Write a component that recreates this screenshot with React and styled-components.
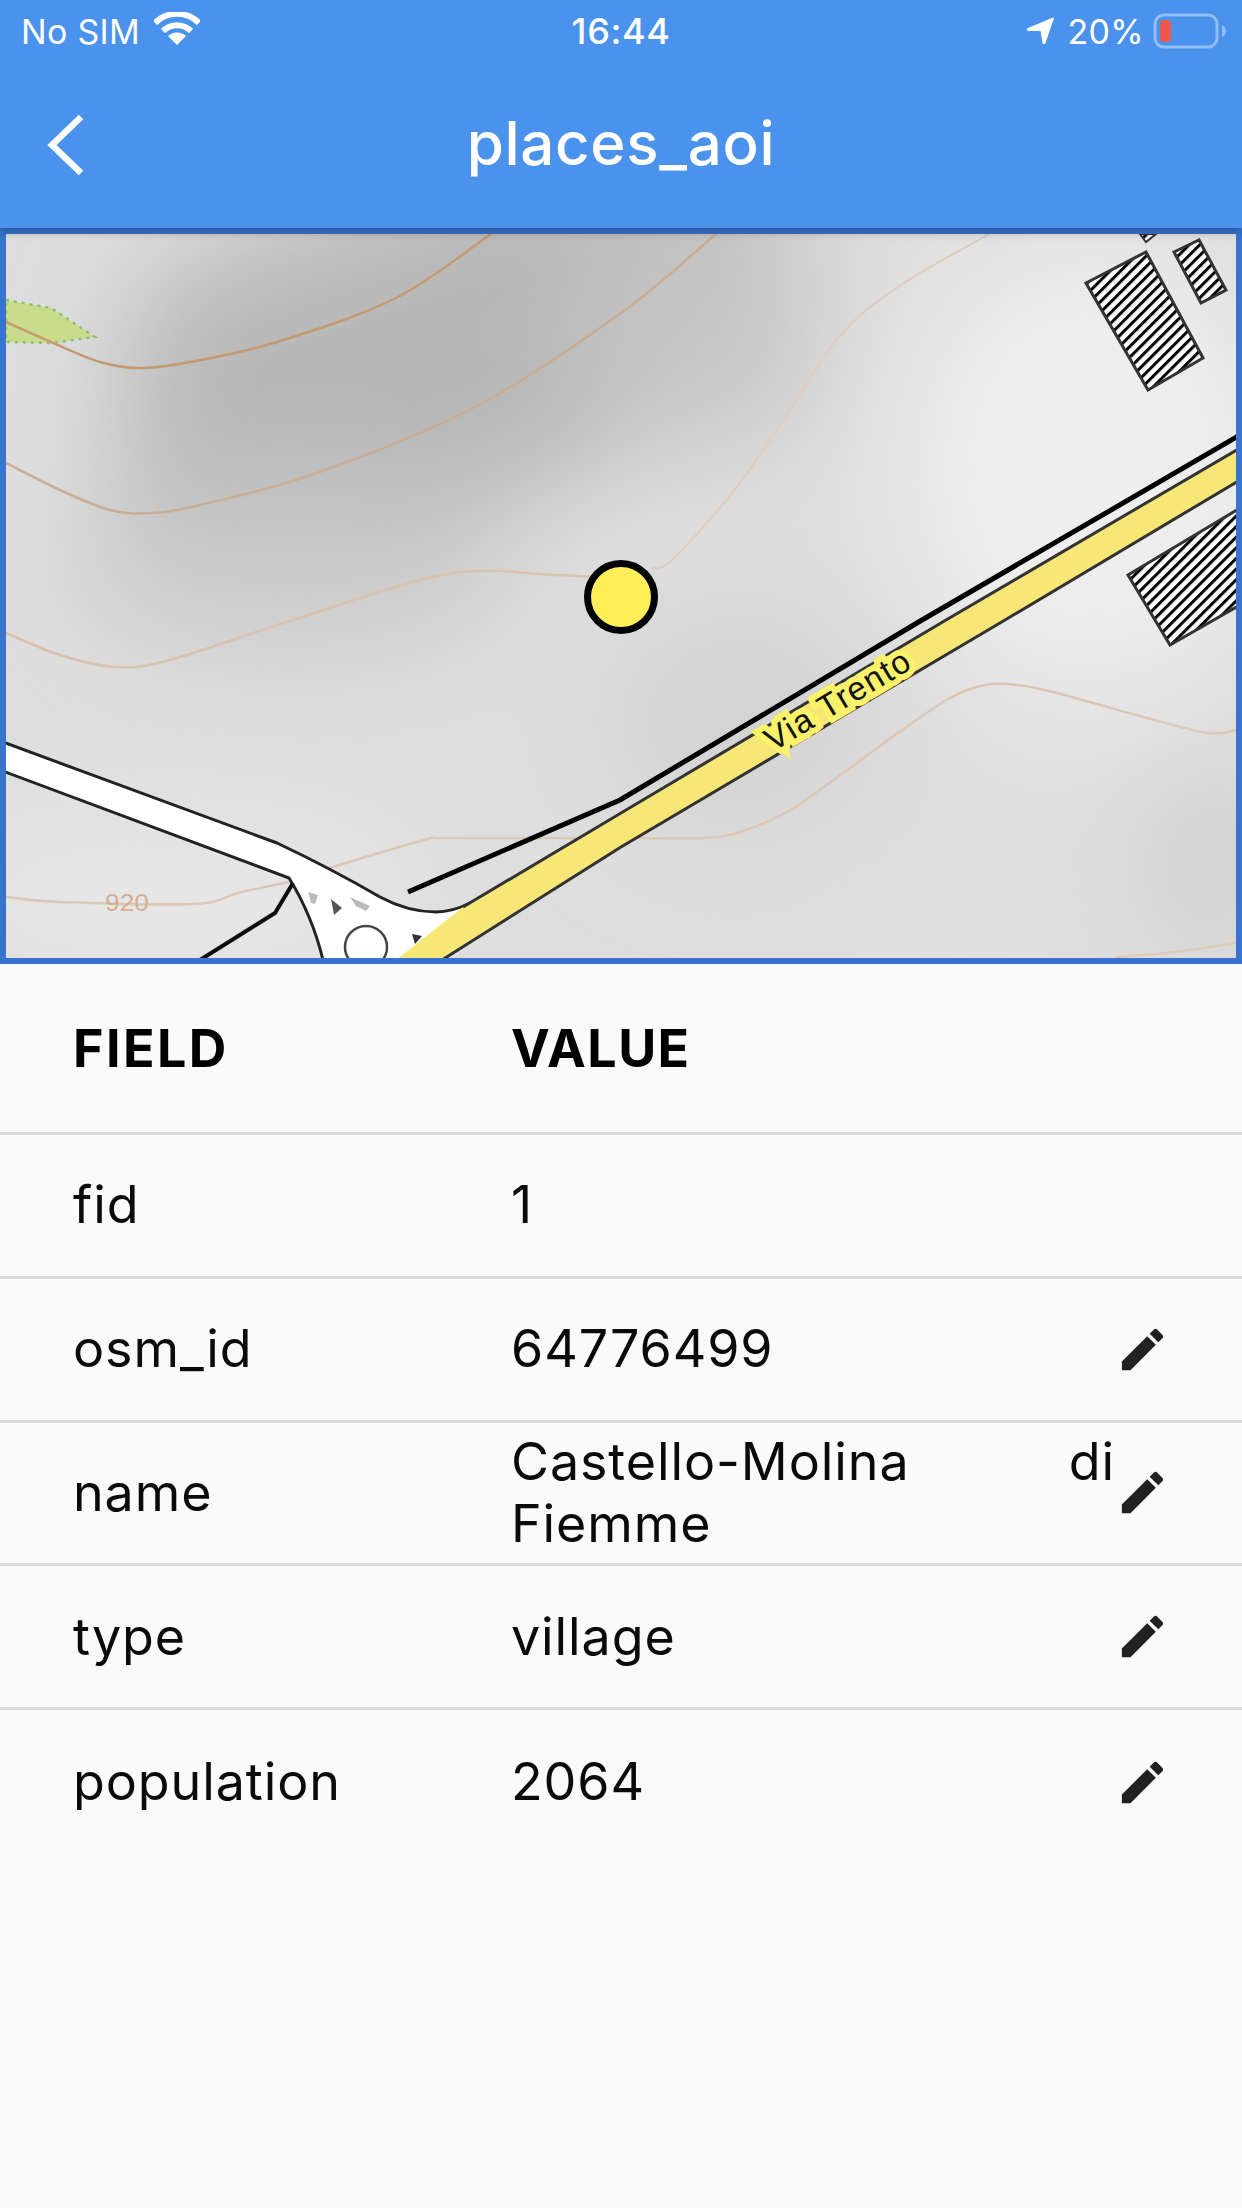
import React from 'react';
import styled, { createGlobalStyle } from 'styled-components';

const Global = createGlobalStyle`
  html, body { margin: 0; padding: 0; background: #fafafa; }
  body { font-family: Inter, "Liberation Sans", sans-serif; }
`;

const Page = styled.div`
  width: 1242px;
  height: 2208px;
  overflow: hidden;
  background: #fafafa;
  color: #0a0a0a;
`;

const AppBar = styled.header`
  position: relative;
  z-index: 1;
  height: 228px;
  background: #4a92ec;
  color: #fff;
  box-shadow: 0 3px 10px rgba(0, 0, 0, 0.3);
`;

const StatusBar = styled.div`
  height: 62px;
  display: grid;
  grid-template-columns: 1fr auto 1fr;
  align-items: center;
  padding: 0 14px 0 14px;
  font-size: 34px;
  letter-spacing: 0.3px;
`;

const StatusSide = styled.div`
  display: flex;
  align-items: center;
  gap: ${(p) => p.$gap || 14}px;
  padding-left: ${(p) => (p.$right ? 0 : 7)}px;
  justify-content: ${(p) => (p.$right ? 'flex-end' : 'flex-start')};
`;

const Clock = styled.div`
  font-size: 36px;
  font-weight: 500;
  letter-spacing: 0.6px;
`;

const NavRow = styled.div`
  height: 166px;
  display: grid;
  grid-template-columns: 1fr auto 1fr;
  align-items: center;
  padding: 0 46px;
`;

const BackIcon = styled.svg`
  display: block;
  width: 40px;
  height: 62px;
`;

const Title = styled.h1`
  margin: -5px 0 0;
  font-size: 60px;
  font-weight: 500;
  letter-spacing: 0.7px;
`;

const MapFrame = styled.div`
  border: 6px solid #3674cf;
  height: 724px;
  overflow: hidden;
`;

const MapSvg = styled.svg`
  display: block;
  width: 1230px;
  height: 724px;
`;

const Table = styled.section`
  display: flex;
  flex-direction: column;
`;

const Row = styled.div`
  display: grid;
  grid-template-columns: 438px 604px 55px;
  align-items: center;
  padding-left: 73px;
  box-sizing: border-box;
  height: ${(p) => (p.$head ? 171 : 143.8)}px;
  border-bottom: ${(p) => (p.$last ? 'none' : '3px solid #dadada')};
  font-size: 52px;
  letter-spacing: 0.9px;
`;

const Heading = styled.div`
  font-size: 52px;
  font-weight: 700;
  letter-spacing: ${(p) => p.$spacing}px;
  color: #000;
`;

const Cell = styled.div`
  line-height: 62px;
  text-align: ${(p) => (p.$justify ? 'justify' : 'left')};
`;

const EditIcon = styled.svg`
  display: block;
  width: 55px;
  height: 55px;
  fill: #212121;
`;

// catmull-rom through the points, good enough for contour lines
const smooth = (pts) => {
  let d = `M${pts[0][0]} ${pts[0][1]}`;
  for (let i = 0; i < pts.length - 1; i++) {
    const p0 = pts[i - 1] || pts[i];
    const p1 = pts[i];
    const p2 = pts[i + 1];
    const p3 = pts[i + 2] || p2;
    const c1x = p1[0] + (p2[0] - p0[0]) / 6;
    const c1y = p1[1] + (p2[1] - p0[1]) / 6;
    const c2x = p2[0] - (p3[0] - p1[0]) / 6;
    const c2y = p2[1] - (p3[1] - p1[1]) / 6;
    d += ` C${c1x} ${c1y} ${c2x} ${c2y} ${p2[0]} ${p2[1]}`;
  }
  return d;
};

const contours = [
  { color: '#c49a72', pts: [[6, 322], [51, 342], [100, 362], [140, 368], [190, 362], [277, 342], [396, 298], [491, 234]] },
  { color: '#c9ad95', pts: [[6, 463], [60, 490], [110, 510], [150, 513], [200, 505], [317, 473], [475, 407], [621, 313], [716, 234]] },
  { color: '#d9c2ae', pts: [[6, 633], [60, 655], [115, 667], [170, 660], [293, 620], [447, 574], [554, 575], [590, 577]] },
  { color: '#e0cdbc', w: 2, pts: [[651, 568], [672, 560], [732, 493], [779, 427], [839, 337], [898, 287], [989, 234]] },
  { color: '#ddc8b5', pts: [[6, 897], [59, 902], [194, 904], [238, 893], [289, 882]] },
  { color: '#ddc8b5', pts: [[329, 868], [424, 840], [444, 838], [574, 838], [641, 838], [704, 838], [740, 832], [787, 812], [843, 773], [898, 733], [950, 698], [985, 685], [1017, 685], [1057, 693], [1136, 715], [1207, 733], [1236, 730]] },
  { color: '#e0cbb8', pts: [[1116, 957], [1175, 952], [1236, 943]] },
];

const shades = [
  { cx: 400, cy: 360, rx: 280, ry: 150, c: '#b8b8b8' },
  { cx: 300, cy: 470, rx: 190, ry: 90, c: '#b8b8b8' },
  { cx: 570, cy: 230, rx: 240, ry: 70, c: '#b8b8b8' },
  { cx: 290, cy: 570, rx: 220, ry: 80, c: '#cacaca' },
  { cx: 700, cy: 340, rx: 120, ry: 110, c: '#c6c6c6' },
  { cx: 1090, cy: 470, rx: 190, ry: 230, c: '#eeeeee' },
  { cx: 1100, cy: 710, rx: 130, ry: 50, c: '#e4e4e4' },
  { cx: 170, cy: 900, rx: 240, ry: 70, c: '#e8e8e8' },
  { cx: 1210, cy: 860, rx: 60, ry: 110, c: '#d0d0d0' },
  { cx: 740, cy: 720, rx: 140, ry: 120, c: '#d4d4d4' },
  { cx: 960, cy: 940, rx: 120, ry: 40, c: '#e0e0e0' },
];

const fields = [
  { name: 'fid', value: '1' },
  { name: 'osm_id', value: '64776499', edit: true },
  { name: 'name', value: 'Castello-Molina di Fiemme', edit: true, justify: true },
  { name: 'type', value: 'village', edit: true },
  { name: 'population', value: '2064', edit: true, last: true },
];

const AreaMap = () => (
  <MapSvg viewBox="6 234 1230 724">
    <defs>
      <filter id="hill" x="-20%" y="-20%" width="140%" height="140%">
        <feGaussianBlur stdDeviation="55" />
      </filter>
      <filter id="soft" x="-5%" y="-5%" width="110%" height="110%">
        <feGaussianBlur stdDeviation="0.45" />
      </filter>
      <pattern id="hatch" width="7.5" height="7.5" patternUnits="userSpaceOnUse" patternTransform="rotate(-45)">
        <rect width="7.5" height="7.5" fill="#fff" />
        <rect width="7.5" height="3" fill="#000" />
      </pattern>
    </defs>

    <rect x="6" y="234" width="1230" height="724" fill="#dedede" />
    <g filter="url(#hill)">
      {shades.map((s, i) => (
        <ellipse key={i} cx={s.cx} cy={s.cy} rx={s.rx} ry={s.ry} fill={s.c} />
      ))}
    </g>

    <g filter="url(#soft)">
      <path d="M6 300 L51 308 L95 337 L51 343 L6 342 Z" fill="#c8dc8c" stroke="#8cc070" strokeWidth="2.5" strokeDasharray="3 5" />

      {contours.map((c, i) => (
        <path key={i} d={smooth(c.pts)} fill="none" stroke={c.color} strokeWidth={c.w || 2.5} />
      ))}
      <text x="127" y="911" fontFamily="Liberation Sans, sans-serif" fontSize="24" textAnchor="middle" fill="#d2ad90" textLength="44" lengthAdjust="spacingAndGlyphs">920</text>

      {/* white road and junction */}
      <path
        d="M0 741 L277 843 Q330 868 380 897 Q408 912 436 912 Q452 912 470 903 L400 962 L323 962 Q312 930 301 897 L289 878 L0 770 Z"
        fill="#fff"
      />
      <path d="M0 741 L277 843 Q330 868 380 897 Q408 912 436 912 Q452 912 470 903" fill="none" stroke="#222" strokeWidth="3" />
      <path d="M0 770 L289 878 Q312 915 323 960" fill="none" stroke="#222" strokeWidth="3" />
      <circle cx="366" cy="947" r="21" fill="none" stroke="#444" strokeWidth="2.5" />
      <path d="M331 899 L342 908 L334 915 Z" fill="#555" />
      <path d="M308 892 L318 895 L315 904 L311 903 Z" fill="#bbb" />
      <path d="M350 897 L370 906 L366 911 L356 906 Z" fill="#bbb" />
      <path d="M412 934 L422 936 L415 944 Z" fill="#333" />
      <path d="M293 883 L275 913 L200 960" fill="none" stroke="#111" strokeWidth="4" />

      {/* yellow road */}
      <path d="M396 960 L463 907 L621 813 L946 620 L1240 448 L1240 480 L1005 620 L621 847 L442 960 Z" fill="#f6e777" />
      <path d="M463 907 L621 813 L946 620 L1240 448" fill="none" stroke="#333" strokeWidth="3" />
      <path d="M442 960 L621 847 L1005 620 L1240 480" fill="none" stroke="#333" strokeWidth="3" />
      <path d="M408 892 L620 800 L922 620 L1240 435" fill="none" stroke="#000" strokeWidth="5" />
    </g>

    {/* buildings */}
    <path d="M1086 283 L1146 252 L1203 358 L1148 390 Z" fill="url(#hatch)" stroke="#333" strokeWidth="3" />
    <path d="M1174 252 L1199 240 L1226 290 L1201 303 Z" fill="url(#hatch)" stroke="#333" strokeWidth="3" />
    <path d="M1128 575 L1240 508 L1240 605 L1170 645 Z" fill="url(#hatch)" stroke="#333" strokeWidth="3" />
    <path d="M1140 234 L1156 234 L1146 242 Z" fill="url(#hatch)" stroke="#333" strokeWidth="2" />

    <text
      x="838"
      y="711"
      transform="rotate(-31 838 700)"
      fontFamily="Liberation Sans, sans-serif"
      fontSize="33"
      letterSpacing="1.5"
      textAnchor="middle"
      fill="#111"
      stroke="#f9f26a"
      strokeWidth="12"
      paintOrder="stroke"
    >
      Via Trento
    </text>

    <circle cx="621" cy="597" r="33.5" fill="#ffee58" stroke="#000" strokeWidth="7" />
  </MapSvg>
);

export default function App() {
  return (
    <Page>
      <Global />
      <AppBar>
        <StatusBar>
          <StatusSide>
            <span>No SIM</span>
            <svg width="46" height="34" viewBox="0 0 46 34" style={{ marginTop: -4 }}>
              <path d="M23 33 L14 24 A13 13 0 0 1 32 24 Z" fill="#fff" />
              <path d="M9 19 A20 20 0 0 1 37 19" fill="none" stroke="#fff" strokeWidth="6" />
              <path d="M1 11 A31 31 0 0 1 45 11" fill="none" stroke="#fff" strokeWidth="6" />
            </svg>
          </StatusSide>
          <Clock>16:44</Clock>
          <StatusSide $right $gap={8}>
            <svg width="28" height="28" viewBox="0 0 28 28" style={{ marginRight: 6 }}>
              <path d="M27 0.5 Q28 0.5 27.7 2 L19.5 26 Q18 28.5 16.6 26 L14.5 14 L2 14 Q-0.5 12.5 2 11 Z" fill="#fff" />
            </svg>
            <span>20%</span>
            <svg width="76" height="36" viewBox="0 0 76 36">
              <rect x="3" y="2" width="62" height="32" rx="9" fill="none" stroke="#fff" strokeOpacity="0.4" strokeWidth="3" />
              <rect x="8" y="7" width="11" height="22" rx="4" fill="#f0584a" />
              <path d="M70 12 Q74 14 74 18 Q74 22 70 24 Z" fill="#fff" fillOpacity="0.4" />
            </svg>
          </StatusSide>
        </StatusBar>
        <NavRow>
          <BackIcon viewBox="0 0 40 62">
            <path d="M35 3 L6 31 L35 59" fill="none" stroke="#fff" strokeWidth="6.5" />
          </BackIcon>
          <Title>places_aoi</Title>
        </NavRow>
      </AppBar>

      <MapFrame>
        <AreaMap />
      </MapFrame>

      <Table>
        <Row $head>
          <Heading $spacing={2.4}>FIELD</Heading>
          <Heading $spacing={1.4}>VALUE</Heading>
        </Row>
        {fields.map((f) => (
          <Row key={f.name} $last={f.last}>
            <Cell>{f.name}</Cell>
            <Cell $justify={f.justify}>{f.value}</Cell>
            {f.edit && (
              <EditIcon viewBox="0 0 24 24">
                <path d="M3 17.25V21h3.75L17.81 9.94l-3.75-3.75L3 17.25zM20.71 7.04c.39-.39.39-1.02 0-1.41l-2.34-2.34c-.39-.39-1.02-.39-1.41 0l-1.83 1.83 3.75 3.75 1.83-1.83z" />
              </EditIcon>
            )}
          </Row>
        ))}
      </Table>
    </Page>
  );
}
